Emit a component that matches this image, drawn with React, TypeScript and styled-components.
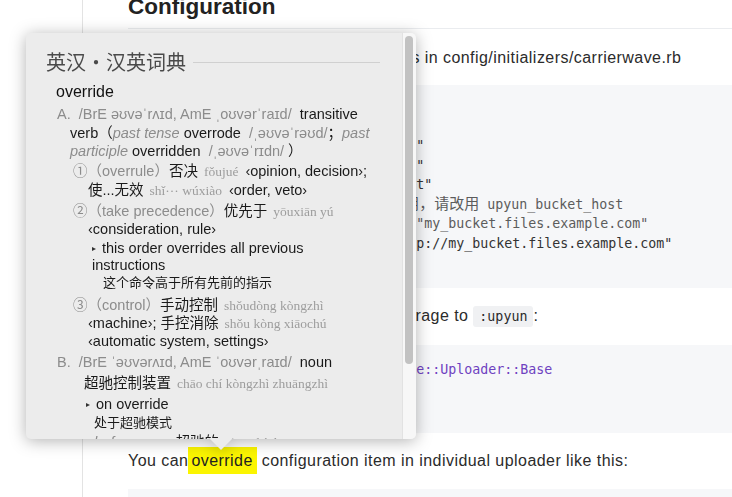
import React from "react";
import styled, { createGlobalStyle } from "styled-components";

const Global = createGlobalStyle`
  html, body { margin: 0; padding: 0; background: #fff; }
  body {
    width: 732px;
    height: 497px;
    overflow: hidden;
    font-family: "Liberation Sans", Arial, "Noto Sans CJK SC", sans-serif;
  }
`;

const Page = styled.div`
  position: relative;
  display: flex;
  width: 732px;
  height: 497px;
  overflow: hidden;
`;

const Sidebar = styled.aside`
  flex: 0 0 82px;
  border-right: 1px solid #e3e3e3;
`;

const Article = styled.main`
  flex: 1;
  min-width: 0;
  padding-left: 45px;
  display: flex;
  flex-direction: column;
  gap: 14.5px;
  color: #2b2b2b;
  font-size: 16px;
`;

const Heading = styled.h2`
  margin: -7.4px 0 0;
  padding-bottom: 7.3px;
  font-size: 22.5px;
  line-height: 1.25;
  font-weight: 700;
  color: #222;
  border-bottom: 1px solid #eaecef;
`;

const Para = styled.p`
  margin: 0;
  line-height: 27px;
  letter-spacing: 0.45px;
  white-space: nowrap;
`;

const InlineCode = styled.code`
  font-family: "DejaVu Sans Mono", monospace;
  font-size: 13.3px;
  letter-spacing: 0;
  background: #f0f1f3;
  border-radius: 3px;
  padding: 3px 6px;
`;

const Mark = styled.mark`
  display: inline-block;
  background: #fbf500;
  color: #222;
  line-height: 27px;
  padding: 0 4px 0 3px;
`;

const CodeBlock = styled.pre<{ $top: number; $bottom: number }>`
  margin: 0;
  background: #f6f7f9;
  padding: ${(p) => p.$top}px 24px ${(p) => p.$bottom}px;
  font-family: "DejaVu Sans Mono", monospace;
  font-size: 13.3px;
  letter-spacing: 0;
  line-height: 19.5px;
  color: #333;
  white-space: pre;
`;

const Kw = styled.span`color: #d73a49;`;
const Const = styled.span`color: #6f42c1;`;
const Sym = styled.span`color: #005cc5;`;
const Str = styled.span`color: #333;`;
const Comment = styled.span`color: #5c5c5c;`;
const CodeCJK = styled.span`
  font-family: "Noto Sans CJK SC", sans-serif;
  font-size: 15px;
  line-height: 1;
`;

/* ---------- dictionary popup ---------- */

const Popup = styled.div`
  position: absolute;
  left: 26px;
  top: 33px;
  width: 390px;
  filter: drop-shadow(0 2px 8px rgba(0, 0, 0, 0.3));
`;

const PopupBox = styled.div`
  display: flex;
  height: 406px;
  background: #ececec;
  border-radius: 5px;
  overflow: hidden;
`;

const PopupScroll = styled.div`
  flex: 1;
  min-width: 0;
  overflow: hidden;
  padding: 16px 22px 0 20px;
  color: #1a1a1a;
  font-family: "Liberation Sans", Arial, "Noto Sans CJK SC", sans-serif;
  font-size: 14.5px;
`;

const ScrollTrack = styled.div`
  flex: 0 0 14px;
  box-sizing: border-box;
  background: #f7f7f7;
  border-left: 1px solid #e2e2e2;
  padding: 3px 3px 0 2px;
`;

const Thumb = styled.div`
  width: 8px;
  height: 328px;
  border-radius: 4px;
  background: #c2c2c2;
`;

const Arrow = styled.div`
  width: 24px;
  height: 12px;
  margin: -1px 0 0 183px;
  background: #ececec;
  clip-path: polygon(0 0, 100% 0, 50% 100%);
`;

const DictTitle = styled.div`
  display: flex;
  align-items: center;
  gap: 7px;
  height: 26px;
  font-family: "Noto Sans CJK SC", sans-serif;
  font-size: 20px;
  line-height: 26px;
  color: #4a4a4a;
`;

const TitleRule = styled.div`
  flex: 1;
  height: 1px;
  background: #d0d0d0;
`;

const Entry = styled.div`
  padding-left: 10px;
  margin-top: 8px;
`;

const Headword = styled.div`
  height: 18px;
  font-size: 16px;
  line-height: 18px;
  color: #111;
`;

const Row = styled.div<{ $indent?: number; $gap?: number; $lh?: number; $size?: number }>`
  height: ${(p) => p.$lh ?? 18}px;
  padding-left: ${(p) => p.$indent ?? 0}px;
  margin-top: ${(p) => p.$gap ?? 0}px;
  line-height: ${(p) => p.$lh ?? 18}px;
  font-size: ${(p) => (p.$size ? `${p.$size}px` : "inherit")};
  white-space: nowrap;
`;

const Gray = styled.span`color: #8c8c8c;`;
const Phonetic = styled.span`
  color: #8c8c8c;
  font-family: "Liberation Sans", "DejaVu Sans", sans-serif;
`;
const Em = styled.span`
  color: #8c8c8c;
  font-style: italic;
`;
const Pinyin = styled.span`
  font-family: "Liberation Serif", "DejaVu Serif", serif;
  font-size: 13.5px;
  color: #9d9d9d;
  margin: 0 7px 0 6px;
`;
const Bullet = styled.span`
  display: inline-block;
  width: 0;
  height: 0;
  border-left: 4px solid #333;
  border-top: 2.5px solid transparent;
  border-bottom: 2.5px solid transparent;
  margin-right: 6px;
  vertical-align: 2px;
`;

function DictionaryPopup() {
  return (
    <Popup>
      <PopupBox>
        <PopupScroll>
          <DictTitle>
            <span>英汉・汉英词典</span>
            <TitleRule />
          </DictTitle>
          <Entry>
            <Headword>override</Headword>
            <Row $indent={1} $gap={4}>
              <Gray>A.&nbsp; </Gray>
              <Phonetic>/BrE əʊvəˈrʌɪd, AmE ˌoʊvərˈraɪd/</Phonetic>&nbsp; transitive
            </Row>
            <Row $indent={14} $gap={1}>
              verb（<Em>past tense</Em> overrode&nbsp; <Phonetic>/ˌəʊvəˈrəʊd/</Phonetic>；<Em>past</Em>
            </Row>
            <Row $indent={14}>
              <Em>participle</Em> overridden&nbsp; <Phonetic>/ˌəʊvəˈrɪdn/</Phonetic>&nbsp;）
            </Row>

            <Row $indent={17} $gap={2}>
              <Gray>①（overrule）</Gray>否决<Pinyin>fǒujué</Pinyin>‹opinion, decision›;
            </Row>
            <Row $indent={32} $gap={1}>
              使...无效<Pinyin>shǐ··· wúxiào</Pinyin>‹order, veto›
            </Row>

            <Row $indent={17} $gap={3}>
              <Gray>②（take precedence）</Gray>优先于<Pinyin>yōuxiān yú</Pinyin>
            </Row>
            <Row $indent={32}>‹consideration, rule›</Row>
            <Row $indent={36} $gap={2} $lh={17}>
              <Bullet />this order overrides all previous
            </Row>
            <Row $indent={36} $lh={17}>instructions</Row>
            <Row $indent={47} $gap={0} $size={13}>
              这个命令高于所有先前的指示
            </Row>

            <Row $indent={17} $gap={4}>
              <Gray>③（control）</Gray>手动控制<Pinyin>shǒudòng kòngzhì</Pinyin>
            </Row>
            <Row $indent={32}>
              ‹machine›; 手控消除<Pinyin>shǒu kòng xiāochú</Pinyin>
            </Row>
            <Row $indent={32}>‹automatic system, settings›</Row>

            <Row $indent={1} $gap={3}>
              <Gray>B.&nbsp; </Gray>
              <Phonetic>/BrE ˈəʊvərʌɪd, AmE ˈoʊvərˌraɪd/</Phonetic>&nbsp; noun
            </Row>
            <Row $indent={28} $gap={3}>
              超驰控制装置<Pinyin>chāo chí kòngzhì zhuāngzhì</Pinyin>
            </Row>
            <Row $indent={30} $gap={3}>
              <Bullet />on override
            </Row>
            <Row $indent={38} $gap={1} $size={13}>
              处于超驰模式
            </Row>
            <Row $indent={38} $gap={1}>
              <Em>before noun</Em> 超驰的<Pinyin>chāochí de</Pinyin>
            </Row>
          </Entry>
        </PopupScroll>
        <ScrollTrack>
          <Thumb />
        </ScrollTrack>
      </PopupBox>
      <Arrow />
    </Popup>
  );
}

export default function App() {
  return (
    <>
      <Global />
      <Page>
        <Sidebar />
        <Article>
          <Heading>Configuration</Heading>
          <Para>You need to put upyun account configs in config/initializers/carrierwave.rb</Para>
          <CodeBlock $top={12} $bottom={15}>
            <Const>CarrierWave</Const>.configure <Kw>do</Kw> |config|{"\n"}
            {"  "}config.storage = <Sym>:upyun</Sym>{"\n"}
            {"  "}config.upyun_username = <Str>"xxxxxx"</Str>{"\n"}
            {"  "}config.upyun_password = <Str>"xxxxxx"</Str>{"\n"}
            {"  "}config.upyun_bucket = <Str>"my_bucket"</Str>{"\n"}
            {"  "}<Comment># upyun_bucket_domain <CodeCJK>已经被弃用，请改用</CodeCJK> upyun_bucket_host</Comment>{"\n"}
            {"  "}<Comment># config.upyun_bucket_domain = "my_bucket.files.example.com"</Comment>{"\n"}
            {"  "}config.upyun_bucket_host = <Str>"http://my_bucket.files.example.com"</Str>{"\n"}
            <Kw>end</Kw>
          </CodeBlock>
          <Para>
            In your uploader class, change the storage to <InlineCode>:upyun</InlineCode>:
          </Para>
          <CodeBlock $top={15} $bottom={14.5}>
            <Kw>class</Kw> <Const>AvatarUploader</Const> &lt; <Const>CarrierWave::Uploader::Base</Const>{"\n"}
            {"  "}storage <Sym>:upyun</Sym>{"\n"}
            <Kw>end</Kw>
          </CodeBlock>
          <Para>
            You can<Mark>override</Mark> configuration item in individual uploader like this:
          </Para>
          <CodeBlock $top={15} $bottom={15}>
            <Kw>class</Kw> <Const>AvatarUploader</Const> &lt; <Const>CarrierWave::Uploader::Base</Const>{"\n"}
            {"  "}upyun_bucket <Str>"another_bucket"</Str>{"\n"}
            <Kw>end</Kw>
          </CodeBlock>
        </Article>
        <DictionaryPopup />
      </Page>
    </>
  );
}
